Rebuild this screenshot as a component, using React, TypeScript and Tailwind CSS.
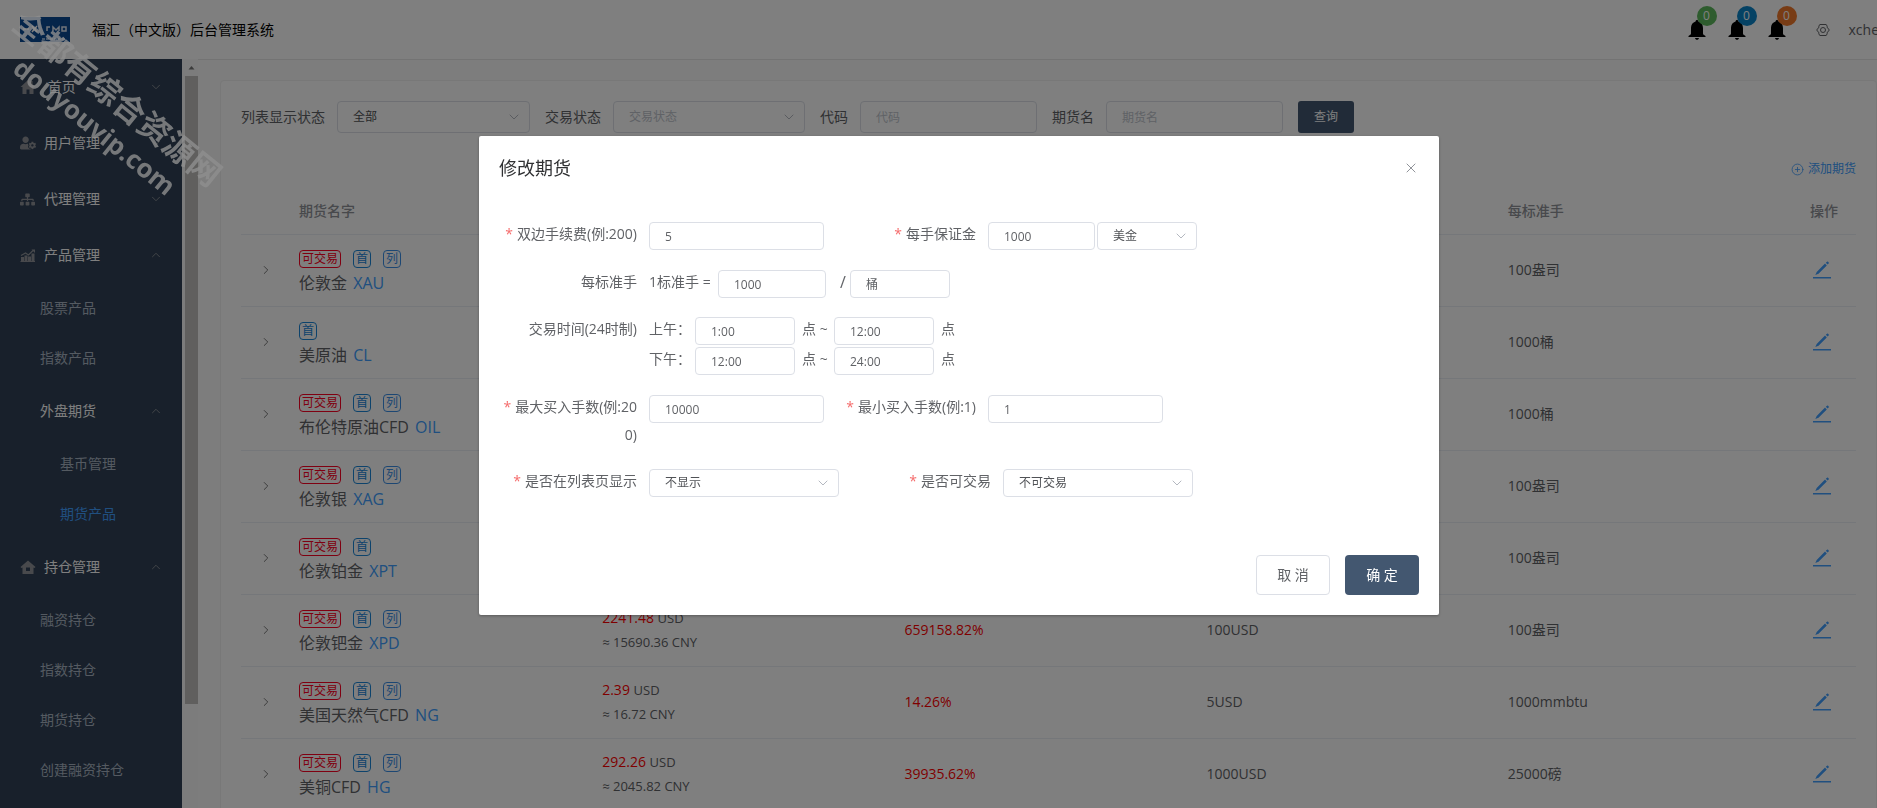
import React from 'react';
import { ChevronDown, ChevronRight, ChevronUp, CirclePlus, X } from 'lucide-react';
import { FaSitemap, FaUserCog } from 'react-icons/fa';

interface MenuItem {
  label: string;
  level: 1 | 2 | 3;
  icon?: React.ReactNode;
  arrow?: 'up' | 'down';
  active?: boolean;
}

interface Product {
  name: string;
  code: string;
  tags: string[];
  unit: string;
  price?: string;
  cny?: string;
  change?: string;
  margin?: string;
}

const HomeIcon = () => (
  <svg viewBox="0 0 16 16" className="w-4 h-4" fill="currentColor">
    <path d="M8 1 0.5 8h2v7h4v-4.500h3V15h4V8h2L12.500 5.200V2h-2v1.400z" />
  </svg>
);

const ChartIcon = () => (
  <svg viewBox="0 0 16 16" className="w-4 h-4" fill="currentColor">
    <path d="M1 10h3v4H1zM4.500 8.500h3V14h-3zM8 9.500h3V14H8zM11.500 6.500H14.500V14h-3zM0.500 14h14.500v1H0.500z" />
    <path d="M1 8.500 5.500 6l3 2L13 3.500" fill="none" stroke="currentColor" strokeWidth="1.200" />
    <path d="M11.500 2.500H15V6z" />
  </svg>
);

const WarehouseIcon = () => (
  <svg viewBox="0 0 16 16" className="w-4 h-4" fill="currentColor" fillRule="evenodd">
    <path d="M8 1.500 0.500 8l1 1 1-.6V15h11V8.400l1 .6 1-1zM6 8.500h4V12H6z" />
  </svg>
);

const BellIcon = () => (
  <svg viewBox="0 0 18 20" className="w-[18px] h-5" fill="currentColor">
    <path d="M9 0c.9 0 1.300.6 1.400 1.400C13.300 2.200 15 4.600 15 8v5.500c0 .9.9 1.600 2.500 2.500v1H.5v-1C2.100 15.100 3 14.400 3 13.500V8c0-3.400 1.700-5.800 4.600-6.600C7.700.6 8.100 0 9 0z" />
    <path d="M7 18h4c-.2 1.200-1 1.800-2 1.800S7.200 19.200 7 18z" />
  </svg>
);

const SettingIcon = () => (
  <svg viewBox="0 0 14 14" className="w-3.5 h-3.5" fill="none" stroke="currentColor">
    <path d="M3.800 1.500h6.400l1 1.700-.2.900 2.300 2.900-2.300 2.900.2.900-1 1.700H3.800l-1-1.700.2-.9L.7 7 3 4.100l-.2-.9z" />
    <circle cx="7" cy="7" r="2.500" />
  </svg>
);

const EditIcon = () => (
  <svg viewBox="0 0 18 18" className="w-[18px] h-[18px]" fill="currentColor">
    <path d="M0 16h18v1.500H0z" />
    <path d="M12 2.600l1.800 1.800-8.300 8.300L2.300 14l1.400-3.100zM12.800 1.800 14 .7c.8-.6 2.400 1 1.700 1.800l-1.100 1.100z" />
  </svg>
);

const menu: MenuItem[] = [
  { label: '\u00a0首页', level: 1, icon: <HomeIcon />, arrow: 'down' },
  { label: '用户管理', level: 1, icon: <FaUserCog size={16} />, arrow: 'down' },
  { label: '代理管理', level: 1, icon: <FaSitemap size={15} />, arrow: 'down' },
  { label: '产品管理', level: 1, icon: <ChartIcon />, arrow: 'up' },
  { label: '股票产品', level: 2 },
  { label: '指数产品', level: 2 },
  { label: '外盘期货', level: 2, arrow: 'up' },
  { label: '基币管理', level: 3 },
  { label: '期货产品', level: 3, active: true },
  { label: '持仓管理', level: 1, icon: <WarehouseIcon />, arrow: 'up' },
  { label: '融资持仓', level: 2 },
  { label: '指数持仓', level: 2 },
  { label: '期货持仓', level: 2 },
  { label: '创建融资持仓', level: 2 },
];

const products: Product[] = [
  { name: '伦敦金', code: 'XAU', tags: ['可交易', '首', '列'], unit: '100盎司' },
  { name: '美原油', code: 'CL', tags: ['首'], unit: '1000桶' },
  { name: '布伦特原油CFD', code: 'OIL', tags: ['可交易', '首', '列'], unit: '1000桶' },
  { name: '伦敦银', code: 'XAG', tags: ['可交易', '首', '列'], unit: '100盎司' },
  { name: '伦敦铂金', code: 'XPT', tags: ['可交易', '首'], unit: '100盎司' },
  { name: '伦敦钯金', code: 'XPD', tags: ['可交易', '首', '列'], unit: '100盎司', price: '2241.48', cny: '15690.36', change: '659158.82%', margin: '100USD' },
  { name: '美国天然气CFD', code: 'NG', tags: ['可交易', '首', '列'], unit: '1000mmbtu', price: '2.39', cny: '16.72', change: '14.26%', margin: '5USD' },
  { name: '美铜CFD', code: 'HG', tags: ['可交易', '首', '列'], unit: '25000磅', price: '292.26', cny: '2045.82', change: '39935.62%', margin: '1000USD' },
];

const tagColors: Record<string, string> = {
  可交易: 'border-[#ff0022] text-[#ff0022]',
  首: 'border-[#1a86d8] text-[#1a86d8]',
  列: 'border-[#3a8ee6] text-[#3a8ee6]',
};

const notices = [
  { id: 'green', color: 'bg-[#5cb85c]' },
  { id: 'blue', color: 'bg-[#0a84c8]' },
  { id: 'orange', color: 'bg-[#f0782a]' },
];

const controlClass =
  'border border-[#dcdfe6] rounded-[4px] bg-white text-xs placeholder:text-[#c0c4cc] pl-[15px] outline-none';

const SelectBox = ({ id, value, size, muted, label }: { id: string; value: string; size: string; muted?: boolean; label?: string }) => (
  <div className={`relative ${size}`}>
    <select
      id={id}
      aria-label={label}
      defaultValue={value}
      className={`${controlClass} w-full h-full appearance-none ${muted ? 'text-[#c0c4cc]' : 'text-[#505256]'}`}
    >
      <option>{value}</option>
    </select>
    <ChevronDown size={16} strokeWidth={1.5} className="absolute right-2 top-1/2 -translate-y-1/2 text-[#b4b8c0] pointer-events-none" />
  </div>
);

const TextBox = ({ id, value, size, label }: { id?: string; value: string; size: string; label?: string }) => (
  <input id={id} aria-label={label} defaultValue={value} className={`${controlClass} h-7 ${size}`} />
);

const FormItem = ({ label, htmlFor, required, children }: { label: string; htmlFor: string; required?: boolean; children: React.ReactNode }) => (
  <div className="flex items-start">
    <label htmlFor={htmlFor} className="w-[150px] pr-3 text-right leading-7 break-all">
      {required && <span className="text-[#f56c6c] mr-1">*</span>}
      {label}
    </label>
    {children}
  </div>
);

const Header = () => (
  <header className="h-[59px] shrink-0 flex items-center justify-between bg-white pl-5">
    <div className="flex items-center gap-[22px]">
      <svg viewBox="0 0 50 25" className="w-[50px] h-[25px]">
        <rect width="50" height="25" fill="#0b4a94" />
        <path d="M3 12h6M12 9l5 6M17 9l-5 6" stroke="#fff" strokeWidth="1.500" />
        <path d="M27 14v-4h3M33 14v-4l3 3 3-3v4M42 14v-4h4v4z" stroke="#dfe8f5" strokeWidth="1.500" fill="none" />
        <path d="M22 22h24" stroke="#8fb0d8" strokeWidth="2" strokeDasharray="3 1" />
      </svg>
      <h1 className="text-sm text-black">福汇（中文版）后台管理系统</h1>
    </div>
    <div className="flex items-center -mr-0.5">
      {notices.map((notice) => (
        <button key={notice.id} aria-label="通知" className="relative mr-[22px] text-black">
          <BellIcon />
          <span className={`absolute -top-3.5 left-[9px] w-5 h-5 rounded-full text-center text-xs leading-5 text-white ${notice.color}`}>0</span>
        </button>
      ))}
      <span className="ml-2 mr-[19px]">
        <SettingIcon />
      </span>
      <span className="text-sm">xche</span>
    </div>
  </header>
);

const Sidebar = () => (
  <nav className="w-[182px] shrink-0 bg-[#304156] text-sm">
    {menu.map((item) => (
      <a
        key={item.label}
        href="#"
        className={`flex items-center pr-[19px] ${item.level === 1 || item.arrow ? 'h-14' : 'h-[50px]'} ${
          item.level === 1 ? 'pl-5' : item.level === 2 ? 'pl-10' : 'pl-[60px]'
        } ${item.active ? 'text-[#409eff]' : item.level === 1 || item.arrow ? 'text-white' : 'text-[#a9b4c2]'}`}
      >
        {item.icon && <span className="w-6 shrink-0 text-[#909399]">{item.icon}</span>}
        <span className="grow whitespace-nowrap">{item.label}</span>
        {item.arrow === 'down' && <ChevronDown size={14} strokeWidth={1.5} className="text-[#909399]" />}
        {item.arrow === 'up' && <ChevronUp size={14} strokeWidth={1.5} className="text-[#909399]" />}
      </a>
    ))}
  </nav>
);

const ProductTable = () => (
  <table className="w-full table-fixed text-sm text-left">
    <thead>
      <tr className="h-[46px] text-[#909399] border-b border-[#ebeef5]">
        <th className="w-12" />
        <th className="px-2.5 font-medium">期货名字</th>
        <th />
        <th />
        <th />
        <th className="px-2.5 font-medium">每标准手</th>
        <th className="w-14 px-2.5 font-medium">操作</th>
      </tr>
    </thead>
    <tbody>
      {products.map((product) => (
        <tr key={product.code} className="h-[72px] border-b border-[#ebeef5]">
          <td className="pl-[18px]">
            <ChevronRight size={14} strokeWidth={1.5} className="text-[#666]" />
          </td>
          <td className="px-2.5 pt-1">
            <div className="flex gap-3">
              {product.tags.map((tag) => (
                <span key={tag} className={`h-[18px] px-0.5 border rounded-[4px] text-xs leading-4 ${tagColors[tag]}`}>
                  {tag}
                </span>
              ))}
            </div>
            <div className="mt-[3px] text-base leading-6">
              {product.name} <a href="#" className="ml-0.5 text-[#409eff]">{product.code}</a>
            </div>
          </td>
          <td className="px-[11px] leading-6">
            {product.price && (
              <>
                <div>
                  <span className="text-[#ff0000]">{product.price}</span> <span className="text-[13px]">USD</span>
                </div>
                <div className="text-[13px] leading-6">≈ {product.cny} CNY</div>
              </>
            )}
          </td>
          <td className="px-[11px] text-[#ff0000]">{product.change}</td>
          <td className="px-[11px]">{product.margin}</td>
          <td className="px-2.5">{product.unit}</td>
          <td className="pl-[13px]">
            <button aria-label="编辑" className="block text-[#409eff]">
              <EditIcon />
            </button>
          </td>
        </tr>
      ))}
    </tbody>
  </table>
);

const EditDialog = () => (
  <div className="fixed inset-0 bg-black/50 flex justify-center items-start pl-[41px] pt-[136px]">
    <div role="dialog" aria-label="修改期货" className="w-[960px] bg-white rounded-[2px] shadow-[0_1px_3px_rgba(0,0,0,0.3)] text-sm text-[#606266]">
      <div className="flex items-center justify-between pt-5 px-5 pb-3">
        <h2 className="text-lg leading-6 text-[#303133]">修改期货</h2>
        <button aria-label="关闭" className="text-[#909399]">
          <X size={16} strokeWidth={1.5} />
        </button>
      </div>

      <form className="px-5 pt-7">
        <div className="flex gap-3.5 mb-[18px]">
          <FormItem label="双边手续费(例:200)" htmlFor="fee" required>
            <div className="pt-0.5"><TextBox id="fee" value="5" size="w-[175px]" /></div>
          </FormItem>
          <FormItem label="每手保证金" htmlFor="deposit" required>
            <div className="flex gap-0.5 pt-0.5">
              <TextBox id="deposit" value="1000" size="w-[107px]" />
              <SelectBox id="currency" label="币种" value="美金" size="w-[100px] h-7" />
            </div>
          </FormItem>
        </div>

        <div className="mb-[17px]">
          <FormItem label="每标准手" htmlFor="lot">
            <div className="flex pt-0.5">
              <span className="w-[69px] leading-6">1标准手 =</span>
              <TextBox id="lot" value="1000" size="w-[108px]" />
              <span className="w-6 pl-3.5 text-base leading-6">/</span>
              <TextBox label="单位" value="桶" size="w-[100px]" />
            </div>
          </FormItem>
        </div>

        <div className="mb-[18px]">
          <FormItem label="交易时间(24时制)" htmlFor="am-start">
            <div>
              <div className="flex pt-0.5">
                <span className="w-[46px] leading-6">上午：</span>
                <TextBox id="am-start" value="1:00" size="w-[100px]" />
                <span className="w-[39px] pl-[7px] leading-6">点 ~</span>
                <TextBox label="上午结束" value="12:00" size="w-[100px]" />
                <span className="pl-[7px] leading-6">点</span>
              </div>
              <div className="flex pt-0.5">
                <span className="w-[46px] leading-6">下午：</span>
                <TextBox label="下午开始" value="12:00" size="w-[100px]" />
                <span className="w-[39px] pl-[7px] leading-6">点 ~</span>
                <TextBox label="下午结束" value="24:00" size="w-[100px]" />
                <span className="pl-[7px] leading-6">点</span>
              </div>
            </div>
          </FormItem>
        </div>

        <div className="flex gap-3.5 mb-[18px]">
          <FormItem label="最大买入手数(例:200)" htmlFor="max" required>
            <div className="pt-0.5"><TextBox id="max" value="10000" size="w-[175px]" /></div>
          </FormItem>
          <FormItem label="最小买入手数(例:1)" htmlFor="min" required>
            <div className="pt-0.5"><TextBox id="min" value="1" size="w-[175px]" /></div>
          </FormItem>
        </div>

        <div className="flex gap-3.5 mb-[18px]">
          <FormItem label="是否在列表页显示" htmlFor="visible" required>
            <div className="pt-0.5"><SelectBox id="visible" value="不显示" size="w-[190px] h-7" /></div>
          </FormItem>
          <FormItem label="是否可交易" htmlFor="tradable" required>
            <div className="pt-0.5"><SelectBox id="tradable" value="不可交易" size="w-[190px] h-7" /></div>
          </FormItem>
        </div>
      </form>

      <div className="flex justify-end gap-[15px] px-5 pt-10 pb-5">
        <button className="w-[74px] h-10 border border-[#dcdfe6] rounded-[4px]">取 消</button>
        <button className="w-[74px] h-10 rounded-[4px] bg-[#435770] text-white">确 定</button>
      </div>
    </div>
  </div>
);

const Watermark = () => (
  <div className="fixed left-[-45px] top-[74px] w-[300px] h-[80px] rotate-[39deg] text-center font-bold text-[#8f8f8f]/80 pointer-events-none whitespace-nowrap">
    <div className="text-[32px] leading-10">全都有综合资源网</div>
    <div className="text-[26px] leading-8">douyouvip.com</div>
  </div>
);

const App: React.FC = () => {
  return (
    <div className="h-screen overflow-hidden flex flex-col bg-[#fafafa] text-[#606266] font-['Open_Sans','Noto_Sans_CJK_SC',sans-serif]">
      <Header />
      <div className="flex grow min-h-0">
        <Sidebar />
        {/* Sidebar scroll track */}
        <div className="w-4 shrink-0 pl-[3px] pb-[104px] flex flex-col bg-[#f8f8f8]">
          <svg viewBox="0 0 13 17" className="w-[13px] h-[17px] shrink-0">
            <path d="M3.500 10.500h6L6.500 7z" fill="#777" />
          </svg>
          <div className="grow bg-[#c1bfbd]" />
        </div>
        <main className="grow min-w-0 pl-[22px] pt-5 border-t border-[#e6e6e6]">
          <section className="bg-white border border-[#f0f0f0] rounded-[4px] p-5 text-[#606266]">
            <form className="flex items-center gap-[15px] text-sm">
              <div className="flex items-center gap-3">
                <label htmlFor="list-state">列表显示状态</label>
                <SelectBox id="list-state" value="全部" size="w-[193px] h-8" />
              </div>
              <div className="flex items-center gap-3">
                <label htmlFor="trade-state">交易状态</label>
                <SelectBox id="trade-state" value="交易状态" size="w-[192px] h-8" muted />
              </div>
              <div className="flex items-center gap-3">
                <label htmlFor="code">代码</label>
                <input id="code" placeholder="代码" className={`${controlClass} h-8 w-[177px]`} />
              </div>
              <div className="flex items-center gap-3">
                <label htmlFor="name">期货名</label>
                <input id="name" placeholder="期货名" className={`${controlClass} h-8 w-[177px]`} />
              </div>
              <button type="button" className="w-14 h-8 rounded-[3px] bg-[#435770] text-white text-xs">查询</button>
            </form>
            <div className="mt-6 mb-[7px] h-6 flex justify-end">
              <button className="flex items-center gap-1 text-xs text-[#409eff]">
                <CirclePlus size={13} strokeWidth={1.5} />
                添加期货
              </button>
            </div>
            <ProductTable />
          </section>
        </main>
      </div>
      <EditDialog />
      <Watermark />
    </div>
  );
};

export default App;
